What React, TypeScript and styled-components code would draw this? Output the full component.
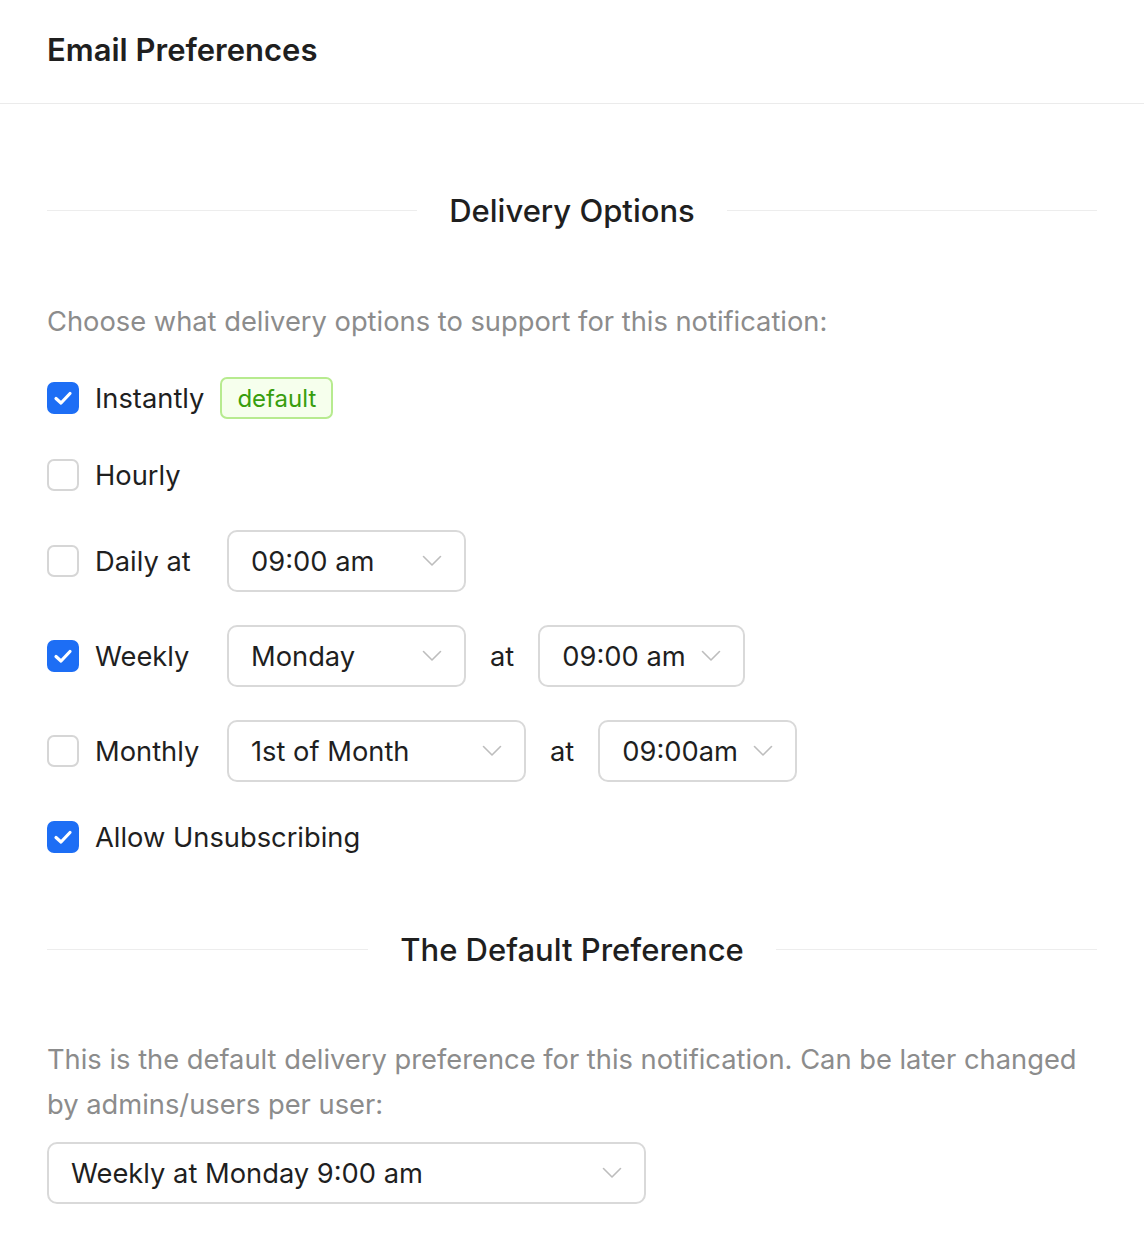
import React from 'react';
import styled, { createGlobalStyle } from 'styled-components';

const Global = createGlobalStyle`
  html, body {
    margin: 0;
    padding: 0;
    background: #ffffff;
  }
  body {
    font-family: Inter, "Noto Sans", "Liberation Sans", sans-serif;
    color: #1f1f1f;
  }
`

const Panel = styled.div`
  width: 1144px;
  min-height: 1254px;
  background: #fff;
`

const Header = styled.div`
  height: 104px;
  box-sizing: border-box;
  border-bottom: 1px solid #ebebeb;
  padding: 0 47px;
  display: flex;
  align-items: center;
`

const Title = styled.h1`
  margin: 0 0 4px;
  font-size: 31px;
  font-weight: 600;
  color: #1f1f1f;
`

const Body = styled.div`
  padding: 84px 47px 40px 47px;
  display: flex;
  flex-direction: column;
`

const Divider = styled.div<{ $top?: number }>`
  display: flex;
  align-items: center;
  gap: 32px;
  height: 44px;
  margin-top: ${p => p.$top || 0}px;

  &::before, &::after {
    content: '';
    flex: 1;
    height: 1px;
    background: #ededed;
  }
`

const DividerText = styled.span`
  font-size: 31px;
  font-weight: 500;
  color: #1f1f1f;
`

const Hint = styled.p<{ $top: number }>`
  margin: ${p => p.$top}px 0 0;
  font-size: 27.3px;
  line-height: 45px;
  color: #8c8c8c;
`

const Options = styled.div`
  display: flex;
  flex-direction: column;
  gap: 33px;
  margin-top: 32px;
`

const Row = styled.div<{ $tall?: boolean }>`
  display: flex;
  align-items: center;
  height: ${p => (p.$tall ? 62 : 44)}px;
`

const Box = styled.span<{ $on?: boolean }>`
  width: 32px;
  height: 32px;
  box-sizing: border-box;
  border-radius: 7px;
  flex-shrink: 0;
  display: flex;
  align-items: center;
  justify-content: center;
  background: ${p => (p.$on ? '#1d6ef5' : '#fff')};
  border: 2px solid ${p => (p.$on ? '#1d6ef5' : '#d6d6d6')};
`

const Label = styled.span<{ $w?: number }>`
  font-size: 27.3px;
  color: #1f1f1f;
  margin-left: 16px;
  width: ${p => (p.$w ? `${p.$w}px` : 'auto')};
`

const Tag = styled.span`
  margin-left: 16px;
  height: 42px;
  box-sizing: border-box;
  padding: 0 15px;
  display: flex;
  align-items: center;
  border: 2px solid #b7eb8f;
  border-radius: 7px;
  background: #f6ffed;
  color: #389e0d;
  font-size: 24px;
`

const Select = styled.div<{ $w: number }>`
  width: ${p => p.$w}px;
  height: 62px;
  box-sizing: border-box;
  border: 2px solid #d9d9d9;
  border-radius: 10px;
  display: flex;
  align-items: center;
  justify-content: space-between;
  padding: 0 22px 0 22px;
  font-size: 27.3px;
  color: #1f1f1f;
  background: #fff;
  flex-shrink: 0;
`

const At = styled.span`
  font-size: 27.3px;
  color: #1f1f1f;
  margin: 0 24px;
`

const Check = () => (
  <svg width="20" height="16" viewBox="0 0 20 16">
    <path d="M3 8.5 L8 13 L17 3.5" fill="none" stroke="#fff" strokeWidth="3.2" strokeLinecap="round" strokeLinejoin="round" />
  </svg>
)

const Chevron = () => (
  <svg width="20" height="12" viewBox="0 0 20 12">
    <path d="M1.5 1.5 L10 10 L18.5 1.5" fill="none" stroke="#bdbdbd" strokeWidth="1.6" strokeLinecap="round" strokeLinejoin="round" />
  </svg>
)

const Checkbox = ({ on }: { on?: boolean }) => <Box $on={on}>{on && <Check />}</Box>

const Dropdown = ({ w, value }: { w: number; value: string }) => (
  <Select $w={w}>
    <span>{value}</span>
    <Chevron />
  </Select>
)

const App = () => {
  return (
    <Panel>
      <Global />
      <Header>
        <Title>Email Preferences</Title>
      </Header>
      <Body>
        <Divider>
          <DividerText>Delivery Options</DividerText>
        </Divider>
        <Hint $top={67}>Choose what delivery options to support for this notification:</Hint>
        <Options>
          <Row>
            <Checkbox on />
            <Label>Instantly</Label>
            <Tag>default</Tag>
          </Row>
          <Row>
            <Checkbox />
            <Label>Hourly</Label>
          </Row>
          <Row $tall>
            <Checkbox />
            <Label $w={132}>Daily at</Label>
            <Dropdown w={239} value="09:00 am" />
          </Row>
          <Row $tall>
            <Checkbox on />
            <Label $w={132}>Weekly</Label>
            <Dropdown w={239} value="Monday" />
            <At>at</At>
            <Dropdown w={207} value="09:00 am" />
          </Row>
          <Row $tall>
            <Checkbox />
            <Label $w={132}>Monthly</Label>
            <Dropdown w={299} value="1st of Month" />
            <At>at</At>
            <Dropdown w={199} value="09:00am" />
          </Row>
          <Row>
            <Checkbox on />
            <Label>Allow Unsubscribing</Label>
          </Row>
        </Options>
        <Divider $top={68}>
          <DividerText>The Default Preference</DividerText>
        </Divider>
        <Hint $top={66}>
          This is the default delivery preference for this notification. Can be later changed by admins/users per user:
        </Hint>
        <div style={{ marginTop: 15 }}>
          <Dropdown w={599} value="Weekly at Monday 9:00 am" />
        </div>
      </Body>
    </Panel>
  )
}

export default App;
